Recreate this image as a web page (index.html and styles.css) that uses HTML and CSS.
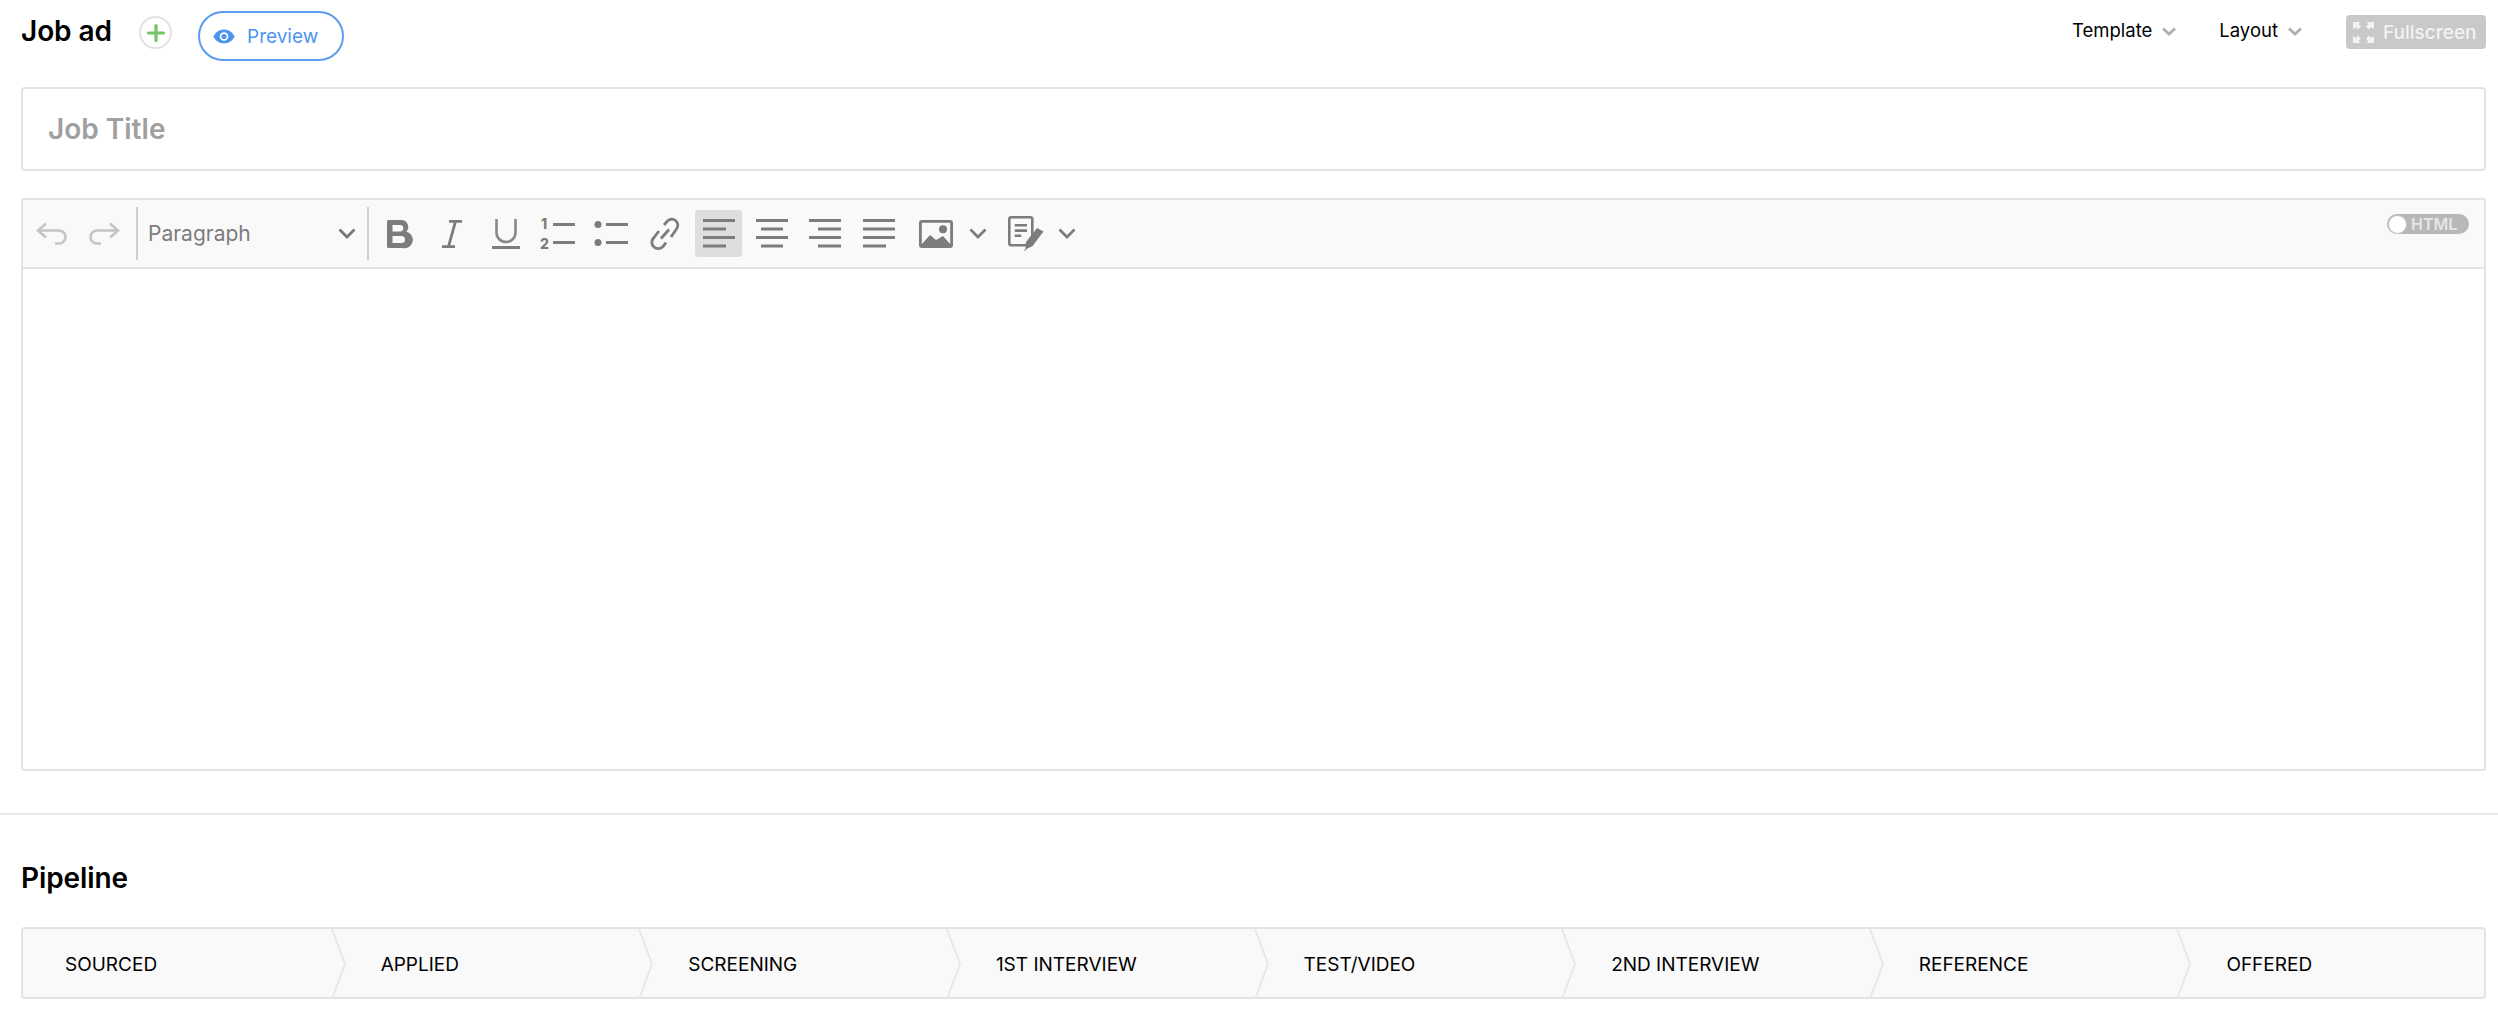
FILE: index.html
```html
<!DOCTYPE html>
<html lang="en">
<head>
<meta charset="utf-8">
<title>Job ad</title>
<link rel="stylesheet" href="styles.css">
</head>
<body>
<main class="page">
  <header class="top">
    <h1 class="title">Job ad</h1>
    <button class="add" aria-label="Add">
      <svg width="20" height="20" viewBox="0 0 20 20"><path d="M10 2.500v15M2.500 10h15" stroke="#74c365" stroke-width="3.200" stroke-linecap="round" fill="none"/></svg>
    </button>
    <button class="preview">
      <svg width="22" height="15" viewBox="0 0 22 15"><path d="M11 0.500C6 .5 2.200 3.400.5 7.500 2.200 11.600 6 14.500 11 14.500s8.800-2.900 10.500-7C19.800 3.400 16 .5 11 .5z" fill="#4f94ef"/><circle cx="11" cy="7.500" r="4.300" fill="#fff"/><circle cx="11" cy="7.500" r="2.600" fill="#4f94ef"/></svg>
      <span>Preview</span>
    </button>
    <div class="top-right">
      <span class="menu">Template<svg class="menu-chev" width="14" height="9" viewBox="0 0 14 9"><path d="M1 1.500l6 5.500 6-5.500" stroke="#b0b0b0" stroke-width="3" fill="none"/></svg></span>
      <span class="menu">Layout<svg class="menu-chev" width="14" height="9" viewBox="0 0 14 9"><path d="M1 1.500l6 5.500 6-5.500" stroke="#b0b0b0" stroke-width="3" fill="none"/></svg></span>
      <button class="full">
        <svg width="21" height="21" viewBox="0 0 21 21"><g fill="#f3f3f3"><path d="M0 0h7.500L5.500 2l2.500 2.500-3 3L2.500 5l-2.500 2.500z"/><path d="M21 0h-7.500l2 2-2.500 2.500 3 3L18.500 5l2.500 2.500z"/><path d="M0 21h7.500l-2-2 2.500-2.500-3-3L2.500 16 0 13.500z"/><path d="M21 21h-7.500l2-2-2.500-2.500 3-3 2.500 2.500 2.500-2.500z"/></g></svg>
        <span>Fullscreen</span>
      </button>
    </div>
  </header>

  <div class="job-title">Job Title</div>

  <section class="editor">
    <div class="toolbar">
      <button class="tb hist"><svg width="32" height="24" viewBox="0 0 32 24"><path d="M10 1.500L2 8.500l8 7M2.500 8.500H23a6.500 6.500 0 0 1 0 13h-4" fill="none" stroke="#c4c4c4" stroke-width="2.600"/></svg></button>
      <button class="tb hist"><svg width="32" height="24" viewBox="0 0 32 24"><path d="M22 1.500l8 7-8 7M29.500 8.500H9a6.500 6.500 0 0 0 0 13h4" fill="none" stroke="#c4c4c4" stroke-width="2.600"/></svg></button>
      <span class="sep sep-first"></span>
      <div class="select">
        <span>Paragraph</span>
        <svg width="18" height="11" viewBox="0 0 18 11"><path d="M1.500 1.500l7.500 7.500 7.500-7.500" fill="none" stroke="#777" stroke-width="2.800"/></svg>
      </div>
      <span class="sep"></span>
      <div class="group">
        <button class="tb"><svg width="24" height="28" viewBox="0 0 24 28"><path d="M1.500 0H14a7 7 0 0 1 5.400 11.700A8 8 0 0 1 15.500 28H1.500A1.500 1.500 0 0 1 0 26.500v-25A1.500 1.500 0 0 1 1.500 0zM5.500 5v6.500H13a3.250 3.250 0 0 0 0-6.500zM5.500 16v7h9a3.500 3.500 0 0 0 0-7z" fill="#7c7c7c" fill-rule="evenodd"/></svg></button>
        <button class="tb"><svg width="20" height="28" viewBox="0 0 20 28"><path d="M7 1.300h13M0 26.700h13M13.500 1.300L6.500 26.700" stroke="#7c7c7c" stroke-width="2.800" fill="none"/></svg></button>
        <button class="tb"><svg width="28" height="30" viewBox="0 0 28 30"><path d="M4.500 0v13.500a9.500 9.500 0 0 0 19 0V0" stroke="#888" stroke-width="2.600" fill="none"/><path d="M0 28.500h28" stroke="#7c7c7c" stroke-width="3"/></svg></button>
        <button class="tb"><svg width="36" height="32" viewBox="0 0 36 32"><path d="M12 5h22v3H12zM12 23h22v3H12z" fill="#7c7c7c"/><text x="0" y="11" class="num">1</text><text x="-1" y="31" class="num">2</text></svg></button>
        <button class="tb"><svg width="36" height="32" viewBox="0 0 36 32"><g fill="#7c7c7c"><circle cx="4" cy="6.500" r="3.500"/><circle cx="4" cy="24.500" r="3.500"/><path d="M12 5h22v3H12zM12 23h22v3H12z"/></g></svg></button>
        <button class="tb"><svg width="28" height="32" viewBox="0 0 28 32"><g fill="none" stroke="#7c7c7c" stroke-width="2.800"><path d="M8 13L2.500 20a6 6 0 0 0 9.500 8.500l3-4"/><path d="M13 7l3-3.500a6 6 0 0 1 9.500 7.500L20 19"/><path d="M10 20.500L18 11.500"/></g></svg></button>
        <button class="tb active"><svg width="32" height="29" viewBox="0 0 32 29"><path d="M0 0h32v3H0zM0 8.500h23v3H0zM0 17h32v3H0zM0 25.500h23v3H0z" fill="#7c7c7c"/></svg></button>
        <button class="tb"><svg width="32" height="29" viewBox="0 0 32 29"><path d="M0 0h32v3H0zM5 8.500h22v3H5zM0 17h32v3H0zM5 25.500h22v3H5z" fill="#7c7c7c"/></svg></button>
        <button class="tb"><svg width="32" height="29" viewBox="0 0 32 29"><path d="M0 0h32v3H0zM9 8.500h23v3H9zM0 17h32v3H0zM9 25.500h23v3H9z" fill="#7c7c7c"/></svg></button>
        <button class="tb"><svg width="32" height="29" viewBox="0 0 32 29"><path d="M0 0h32v3H0zM0 8.500h32v3H0zM0 17h32v3H0zM0 25.500h23v3H0z" fill="#7c7c7c"/></svg></button>
        <button class="tb image"><svg width="34" height="28" viewBox="0 0 34 28"><rect x="1.400" y="1.400" width="31.200" height="25.200" rx="1.500" fill="none" stroke="#7c7c7c" stroke-width="2.800"/><circle cx="24" cy="9.300" r="4" fill="#7c7c7c"/><path d="M2 25l9-10 6 5 7-4 8 9v2H2z" fill="#7c7c7c"/></svg></button>
        <svg class="tb-chev first" width="18" height="11" viewBox="0 0 18 11"><path d="M1.500 1.500l7.500 7.500 7.500-7.500" fill="none" stroke="#7c7c7c" stroke-width="2.800"/></svg>
        <button class="tb doc"><svg width="36" height="35" viewBox="0 0 36 35"><rect x="1.300" y="1.300" width="23" height="28" rx="2" fill="none" stroke="#7c7c7c" stroke-width="2.600"/><path d="M6.700 8h12.300v2.600H6.700zM6.700 13.300h12.300v2.600H6.700zM6.700 18.500h6.500v2.600H6.700z" fill="#7c7c7c"/><path d="M29 12l6.500 3.500L24.500 30l-6 3-1.500 2-.8-.5 1.300-2 .5-6.500z" fill="#7c7c7c"/></svg></button>
        <svg class="tb-chev last" width="18" height="11" viewBox="0 0 18 11"><path d="M1.500 1.500l7.500 7.500 7.500-7.500" fill="none" stroke="#7c7c7c" stroke-width="2.800"/></svg>
      </div>
      <div class="html-toggle"><span class="knob"></span><span class="html-label">HTML</span></div>
    </div>
    <div class="editor-body"></div>
  </section>

  <hr class="rule">

  <h2 class="pipeline-title">Pipeline</h2>
  <ol class="pipeline">
    <li class="stage">SOURCED<svg class="arrow" width="16" height="70" viewBox="0 0 16 70" preserveAspectRatio="none"><path d="M1 0l13 35L1 70" fill="none" stroke="#e8e8e8" stroke-width="2"/></svg></li>
    <li class="stage">APPLIED<svg class="arrow" width="16" height="70" viewBox="0 0 16 70" preserveAspectRatio="none"><path d="M1 0l13 35L1 70" fill="none" stroke="#e8e8e8" stroke-width="2"/></svg></li>
    <li class="stage">SCREENING<svg class="arrow" width="16" height="70" viewBox="0 0 16 70" preserveAspectRatio="none"><path d="M1 0l13 35L1 70" fill="none" stroke="#e8e8e8" stroke-width="2"/></svg></li>
    <li class="stage">1ST INTERVIEW<svg class="arrow" width="16" height="70" viewBox="0 0 16 70" preserveAspectRatio="none"><path d="M1 0l13 35L1 70" fill="none" stroke="#e8e8e8" stroke-width="2"/></svg></li>
    <li class="stage">TEST/VIDEO<svg class="arrow" width="16" height="70" viewBox="0 0 16 70" preserveAspectRatio="none"><path d="M1 0l13 35L1 70" fill="none" stroke="#e8e8e8" stroke-width="2"/></svg></li>
    <li class="stage">2ND INTERVIEW<svg class="arrow" width="16" height="70" viewBox="0 0 16 70" preserveAspectRatio="none"><path d="M1 0l13 35L1 70" fill="none" stroke="#e8e8e8" stroke-width="2"/></svg></li>
    <li class="stage">REFERENCE<svg class="arrow" width="16" height="70" viewBox="0 0 16 70" preserveAspectRatio="none"><path d="M1 0l13 35L1 70" fill="none" stroke="#e8e8e8" stroke-width="2"/></svg></li>
    <li class="stage">OFFERED</li>
  </ol>
</main>
</body>
</html>
```
FILE: styles.css
```css
* { box-sizing: border-box; }
html, body { margin: 0; padding: 0; background: #fff; overflow: hidden; }
body { font-family: Inter, "Liberation Sans", sans-serif; color: #000; }
button { font: inherit; padding: 0; margin: 0; background: none; border: 0; }
svg { overflow: visible; }

.page { padding: 0 12px 0 21px; height: 1022px; }

.top { display: flex; align-items: flex-start; height: 87px; }
.title { margin: 15px 0 0; font-size: 28px; line-height: 32px; font-weight: 600; letter-spacing: -.1px; width: 118px; }
.add { width: 33px; height: 33px; margin-top: 16px; border: 2px solid #e2e2e2; border-radius: 50%; display: flex; align-items: center; justify-content: center; }
.preview { margin: 11px 0 0 26px; width: 146px; height: 50px; border: 2px solid #5b9bf0; border-radius: 25px; color: #4f94ef; font-size: 19px; display: flex; align-items: center; gap: 12px; padding-left: 13px; }
.top-right { margin-left: auto; display: flex; align-items: flex-start; }
.menu { display: flex; align-items: center; font-size: 18.500px; line-height: 30px; margin-top: 15px; margin-right: 43px; }
.menu-chev { margin-left: 10px; margin-top: 3px; }
.menu + .menu { margin-right: 44px; }
.full { margin-top: 15px; width: 140px; height: 34px; background: #c9c9c9; border-radius: 4px; color: #f3f3f3; font-size: 19px; font-weight: 500; display: flex; align-items: center; gap: 9px; padding-left: 7px; }

.job-title { height: 84px; border: 2px solid #e3e3e3; border-radius: 4px; font-size: 28px; font-weight: 600; color: #a0a0a0; display: flex; align-items: center; padding-left: 25px; }

.editor { margin-top: 27px; height: 573px; border: 2px solid #e3e3e3; border-radius: 3px; display: flex; flex-direction: column; }
.toolbar { position: relative; height: 69px; flex: none; background: #f9f9f9; border-bottom: 2px solid #e3e3e3; display: flex; align-items: center; padding-left: 3px; }
.tb { width: 47px; height: 47px; flex: none; display: flex; align-items: center; justify-content: center; border-radius: 3px; }
.hist { width: 52px; }
.sep { width: 2px; height: 53px; background: #cfcfcf; flex: none; }
.sep-first { margin-left: 6px; }
.select { width: 229px; flex: none; display: flex; align-items: center; justify-content: space-between; padding: 0 11px 0 10px; font-size: 21px; color: #7c7c7c; }
.group { display: flex; align-items: center; gap: 6.300px; margin-left: 6.500px; }
.active { background: #dedede; }
.tb.image { margin-left: 4px; }
.tb-chev { flex: none; }
.tb-chev.first { margin-left: 3.700px; }
.tb.doc { margin-left: 8.700px; }
.tb-chev.last { margin-left: 2.200px; }
.num { font: 800 14px Inter, "Liberation Sans", sans-serif; fill: #7c7c7c; }

.html-toggle { position: absolute; right: 15px; top: 14px; width: 82px; height: 20px; border-radius: 10px; background: #b8b8b8; display: flex; align-items: center; padding-left: 1px; }
.knob { width: 19px; height: 19px; background: #fff; border: 1px solid #c4c4c4; border-radius: 50%; flex: none; }
.html-label { color: #e6e6e6; font-size: 16px; font-weight: 600; margin-left: 4px; }

.editor-body { flex: 1; background: #fff; }

.rule { margin: 42px -12px 0 -21px; border: 0; height: 2px; background: #e9e9e9; }

.pipeline-title { margin: 47px 0 0; font-size: 28px; line-height: 32px; font-weight: 600; letter-spacing: -.1px; }

.pipeline { list-style: none; margin: 33px 0 0; padding: 0; height: 72px; border: 2px solid #e3e3e3; border-radius: 4px; background: #f9f9f9; display: grid; grid-template-columns: repeat(8, 1fr); }
.stage { position: relative; display: flex; align-items: center; padding: 2px 0 0 50px; font-size: 19px; line-height: 1; }
.stage:first-child { padding-left: 42px; }
.arrow { position: absolute; left: 100%; top: 0; z-index: 1; }
```
